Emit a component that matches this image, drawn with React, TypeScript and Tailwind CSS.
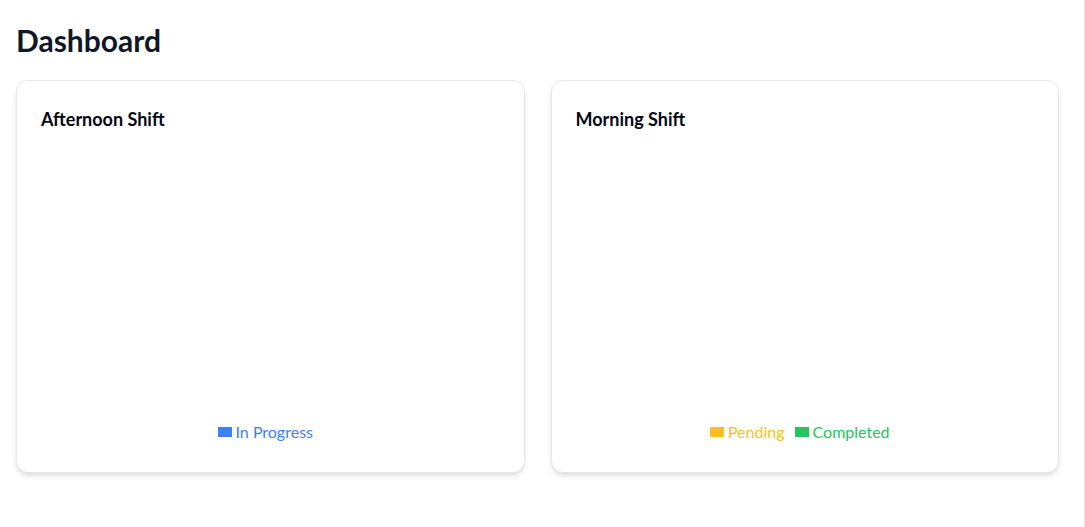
const LegendItem = ({ color, label }: { color: string; label: string }) => {
  return (
    <span className="inline-flex items-center mr-2.5" style={{ color }}>
      <span className="inline-block w-[14px] h-[10px] mr-1" style={{ backgroundColor: color }} />
      {label}
    </span>
  );
};

const ShiftCard = ({
  title,
  items,
}: {
  title: string;
  items: { color: string; label: string }[];
}) => {
  return (
    <div className="flex flex-col h-[393px] rounded-xl border border-gray-200 bg-white shadow-md px-6 pt-6 pb-6">
      <div className="text-lg font-bold text-gray-950 leading-7">{title}</div>
      <div className="flex-1" />
      <div className="flex justify-center text-base leading-6 mb-1">
        {items.map((item) => (
          <LegendItem key={item.label} color={item.color} label={item.label} />
        ))}
      </div>
    </div>
  );
};

export default function App() {
  return (
    <div
      className="min-h-[527px] bg-white border-r border-gray-200 pl-4 pr-[25px] pt-5"
      style={{ fontFamily: 'Lato, "Open Sans", sans-serif' }}
    >
      <h1 className="text-3xl font-bold text-gray-900 leading-10 mb-5">Dashboard</h1>
      <div className="grid grid-cols-2 gap-[26px]">
        <ShiftCard title="Afternoon Shift" items={[{ color: "#3b82f6", label: "In Progress" }]} />
        <ShiftCard
          title="Morning Shift"
          items={[
            { color: "#fbbf24", label: "Pending" },
            { color: "#22c55e", label: "Completed" },
          ]}
        />
      </div>
    </div>
  );
}
